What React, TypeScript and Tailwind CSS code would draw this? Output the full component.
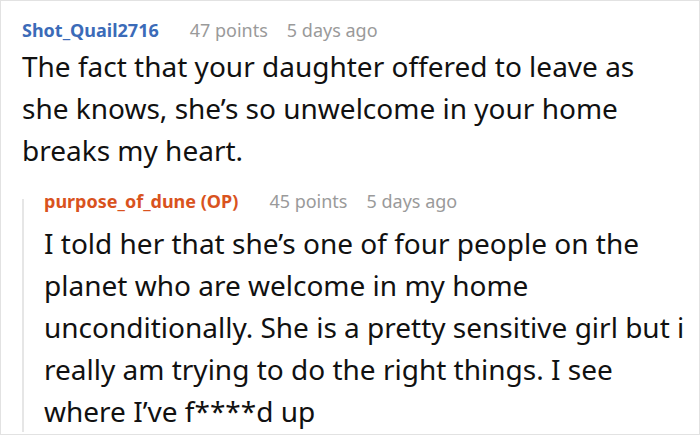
import React from "react";

export default function App() {
  const font = { fontFamily: '"Noto Sans", sans-serif' };
  return (
    <div className="w-[700px] h-[436px] bg-white overflow-hidden" style={font}>
      <div className="h-[435px] border border-[#e2e2e2] pl-[21px] pr-[6px] pt-[17px]">
        <div className="flex items-baseline text-[18px] leading-[24px]">
          <span className="font-bold text-[#3b6bb8]">Shot_Quail2716</span>
          <span className="ml-[31px] text-[#9a9a9a]">47 points</span>
          <span className="ml-[19px] text-[#9a9a9a]">5 days ago</span>
        </div>
        <p className="w-[655px] text-[28px] leading-[42px] text-[#111] mt-[3px]">
          The fact that your daughter offered to leave as she knows, she’s so unwelcome in your home breaks my heart.
        </p>
        <div className="flex mt-[18px]">
          <div className="w-[2px] bg-[#e6e6e6] mt-[10px] h-[233px] shrink-0" />
          <div className="pl-[20px]">
            <div className="flex items-baseline text-[18px] leading-[24px]">
              <span className="font-bold text-[#d9531e]">purpose_of_dune (OP)</span>
              <span className="ml-[31px] text-[#9a9a9a]">45 points</span>
              <span className="ml-[19px] text-[#9a9a9a]">5 days ago</span>
            </div>
            <p className="text-[28px] leading-[42px] text-[#111] mt-[9px]">
              I told her that she’s one of four people on the planet who are welcome in my home unconditionally. She is a pretty sensitive girl but i really am trying to do the right things. I see where I’ve f****d up
            </p>
          </div>
        </div>
      </div>
    </div>
  );
}
